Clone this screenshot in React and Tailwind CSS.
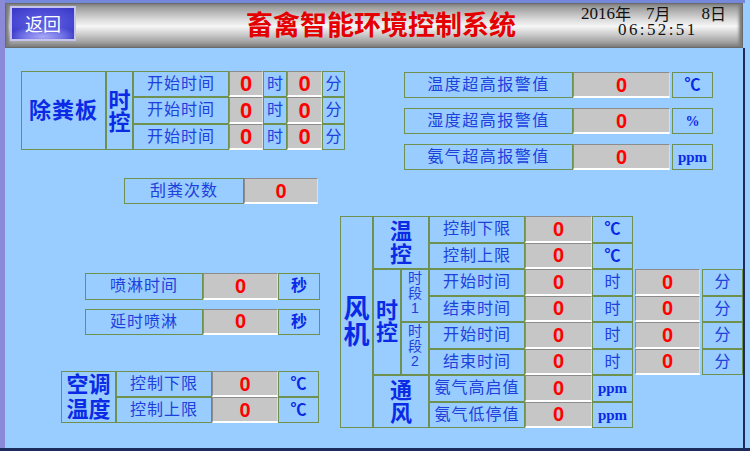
import React from "react";

const B = "border border-[#6f9150]";
const LBL = "text-[#2040dc] text-[16px] tracking-[1px] whitespace-nowrap";
const UNIT = "text-[#2040dc] text-[16px] whitespace-nowrap";
const BIG = "text-[#0a2ae6] font-bold";

function Val({ cls = "", size = "text-[20px]" }) {
  return (
    <div
      className={`${cls} flex items-center justify-center bg-[#c6c6c6] border-t border-l border-[#8c8c8c] border-b-2 border-b-white border-r border-r-[#dedede] text-[#ff0000] font-bold ${size} font-['Liberation_Sans',sans-serif]`}
    >
      0
    </div>
  );
}

function Cell({ cls = "", children }) {
  return (
    <div className={`${cls} flex items-center justify-center ${B}`}>
      {children}
    </div>
  );
}

function Stack({ chars, cls }) {
  return (
    <div className={`${cls} flex flex-col items-center`}>
      {chars.map((c, i) => (
        <span key={i}>{c}</span>
      ))}
    </div>
  );
}

function Header() {
  return (
    <div className="h-[45px] w-[738px] flex items-start border border-[#6a6a6a] bg-[linear-gradient(180deg,#8c8c8c_0%,#b4b4b4_18%,#dedede_38%,#f6f6f6_52%,#d2d2d2_68%,#a8a8a8_86%,#808080_100%)] shadow-[inset_3px_0_3px_#7a7a7a,inset_-3px_0_3px_#7a7a7a]">
      <div className="mt-[2px] ml-[4px] w-[66px] h-[35px] border-2 border-[#c4c4ee] bg-[radial-gradient(ellipse_55%_35%_at_50%_92%,#a8a8f6_0%,#7070e6_60%,transparent_100%),radial-gradient(ellipse_70%_60%_at_50%_45%,#6262e4_0%,#4646d2_70%,#3838c4_100%)] flex items-center justify-center text-white text-[18px] font-['Noto_Sans_CJK_SC',sans-serif]">
        返回
      </div>
      <div className="ml-[167px] mt-[6px] w-[276px] text-center text-[27px] leading-[27px] text-[#e40000] font-semibold whitespace-nowrap font-['Noto_Sans_CJK_SC',sans-serif]">
        畜禽智能环境控制系统
      </div>
      <div className="ml-[62px] mt-[2px] flex flex-col text-[#111] whitespace-nowrap">
        <div className="flex items-end h-[15px]">
          <span className="inline-block leading-[15px] text-[17px] font-['Liberation_Serif',serif]">2016</span>
          <span className="inline-block leading-[15px] text-[16px] font-['Noto_Sans_CJK_SC',sans-serif]">年</span>
          <span className="inline-block leading-[15px] ml-[15px] text-[17px] font-['Liberation_Serif',serif]">7</span>
          <span className="inline-block leading-[15px] text-[16px] font-['Noto_Sans_CJK_SC',sans-serif]">月</span>
          <span className="inline-block leading-[15px] ml-[31px] text-[17px] font-['Liberation_Serif',serif]">8</span>
          <span className="inline-block leading-[15px] text-[16px] font-['Noto_Sans_CJK_SC',sans-serif]">日</span>
        </div>
        <div className="ml-[37px] mt-[1px] h-[16px] leading-[16px] text-[17px] tracking-[2.4px] font-['Liberation_Serif',serif]">
          06:52:51
        </div>
      </div>
    </div>
  );
}

function ManureTable() {
  return (
    <div className="flex ml-[16px] h-[79px]">
      <Cell cls="w-[85px] h-full">
        <span className={`${BIG} text-[22px] tracking-[1px]`}>除粪板</span>
      </Cell>
      <Cell cls="w-[27px] h-full">
        <Stack chars={["时", "控"]} cls={`${BIG} text-[22px] leading-[22px] mt-[3px]`} />
      </Cell>
      <div className="flex flex-col">
        {[0, 1, 2].map((i) => (
          <div key={i} className="flex h-[26.33px]">
            <Cell cls="w-[96px]">
              <span className={LBL}>开始时间</span>
            </Cell>
            <Val cls="w-[34px]" size="text-[22px]" />
            <Cell cls="w-[24px]">
              <span className={UNIT}>时</span>
            </Cell>
            <Val cls="w-[35px]" size="text-[22px]" />
            <Cell cls="w-[23px]">
              <span className={UNIT}>分</span>
            </Cell>
          </div>
        ))}
      </div>
    </div>
  );
}

function AlarmBlock() {
  const rows = [
    ["温度超高报警值", <span className="text-[#0a2ae6] text-[16px] font-bold">℃</span>],
    ["湿度超高报警值", <span className="text-[#0a2ae6] text-[14px] font-bold font-['Liberation_Serif',serif]">%</span>],
    ["氨气超高报警值", <span className="text-[#0a2ae6] text-[15px] font-bold font-['Liberation_Serif',serif]">ppm</span>],
  ];
  return (
    <div className="flex flex-col gap-[10px] ml-[59px] mt-[1px]">
      {rows.map(([l, u], i) => (
        <div key={i} className="flex h-[26px]">
          <Cell cls="w-[169px]">
            <span className="text-[#2040dc] text-[16px] tracking-[1.5px] whitespace-nowrap">{l}</span>
          </Cell>
          <Val cls="w-[97px]" />
          <Cell cls="w-[41px] ml-[2px]">{u}</Cell>
        </div>
      ))}
    </div>
  );
}

function LeftBottom() {
  return (
    <div className="w-[335px] flex flex-col shrink-0">
      <div className="flex h-[26px] ml-[119px] mt-[8px]">
        <Cell cls="w-[120px]">
          <span className={LBL}>刮粪次数</span>
        </Cell>
        <Val cls="w-[74px]" />
      </div>
      <div className="flex flex-col gap-[9px] ml-[80px] mt-[69px]">
        {["喷淋时间", "延时喷淋"].map((l) => (
          <div key={l} className="flex h-[26.5px]">
            <Cell cls="w-[118px]">
              <span className={LBL}>{l}</span>
            </Cell>
            <Val cls="w-[75px]" />
            <Cell cls="w-[42px]">
              <span className="text-[#0a2ae6] text-[16px] font-bold">秒</span>
            </Cell>
          </div>
        ))}
      </div>
      <div className="flex ml-[56px] mt-[36px] h-[52px]">
        <Cell cls="w-[55px] h-full">
          <Stack chars={["空调", "温度"]} cls={`${BIG} text-[22px] leading-[25px]`} />
        </Cell>
        <div className="flex flex-col">
          {["控制下限", "控制上限"].map((l) => (
            <div key={l} className="flex h-[26px]">
              <Cell cls="w-[96px]">
                <span className={LBL}>{l}</span>
              </Cell>
              <Val cls="w-[66px]" />
              <Cell cls="w-[41px]">
                <span className="text-[#0a2ae6] text-[16px] font-bold">℃</span>
              </Cell>
            </div>
          ))}
        </div>
      </div>
    </div>
  );
}

function FanTable() {
  const C = <span className="text-[#0a2ae6] text-[16px] font-bold">℃</span>;
  const P = <span className="text-[#0a2ae6] text-[15px] font-bold font-['Liberation_Serif',serif]">ppm</span>;
  const H = <span className={UNIT}>时</span>;
  const rows = [
    ["控制下限", C, false],
    ["控制上限", C, false],
    ["开始时间", H, true],
    ["结束时间", H, true],
    ["开始时间", H, true],
    ["结束时间", H, true],
    ["氨气高启值", P, false],
    ["氨气低停值", P, false],
  ];
  const seg = `${B} h-[53px] flex flex-col items-center pt-[1px] text-[14px] leading-[15px] text-[#2040dc]`;
  return (
    <div className="flex mt-[46px] h-[212px]">
      <Cell cls="w-[33px] h-full">
        <Stack chars={["风", "机"]} cls={`${BIG} text-[26px] leading-[26px]`} />
      </Cell>
      <div className="flex flex-col w-[56px]">
        <Cell cls="h-[53px]">
          <Stack chars={["温", "控"]} cls={`${BIG} text-[22px] leading-[23px]`} />
        </Cell>
        <div className="flex h-[106px]">
          <Cell cls="w-[28px] h-full">
            <Stack chars={["时", "控"]} cls={`${BIG} text-[22px] leading-[22px]`} />
          </Cell>
          <div className="flex flex-col w-[28px]">
            <div className={seg}>
              <span>时</span>
              <span>段</span>
              <span>1</span>
            </div>
            <div className={seg}>
              <span>时</span>
              <span>段</span>
              <span>2</span>
            </div>
          </div>
        </div>
        <Cell cls="h-[53px]">
          <Stack chars={["通", "风"]} cls={`${BIG} text-[22px] leading-[23px]`} />
        </Cell>
      </div>
      <div className="flex flex-col">
        {rows.map(([l, u, extra], i) => (
          <div key={i} className="flex h-[26.5px]">
            <Cell cls="w-[96px]">
              <span className={LBL}>{l}</span>
            </Cell>
            <Val cls="w-[67px]" />
            <Cell cls="w-[41px]">{u}</Cell>
            {extra && (
              <>
                <Val cls="w-[65px] ml-[2px]" />
                <Cell cls="w-[41px] ml-[2px]">
                  <span className={UNIT}>分</span>
                </Cell>
              </>
            )}
          </div>
        ))}
      </div>
    </div>
  );
}

export default function App() {
  return (
    <div className="w-[750px] h-[451px] flex flex-col bg-[#99ccff] overflow-hidden font-['Liberation_Sans','Noto_Sans_CJK_SC',sans-serif]">
      <div className="flex h-[448px]">
        <div className="w-[5px] h-full bg-[#8a8ad8] shrink-0" />
        <div className="w-[740px] flex flex-col shrink-0">
          <div className="h-[3px] bg-[#7688dc]" />
          <Header />
          <div className="flex-1 border-r-2 border-[#1c2a5c] flex flex-col">
            <div className="flex items-start pt-[23px] h-[122px]">
              <ManureTable />
              <AlarmBlock />
            </div>
            <div className="flex">
              <LeftBottom />
              <FanTable />
            </div>
          </div>
        </div>
      </div>
      <div className="h-[3px] bg-[#1c2a5c]" />
    </div>
  );
}
